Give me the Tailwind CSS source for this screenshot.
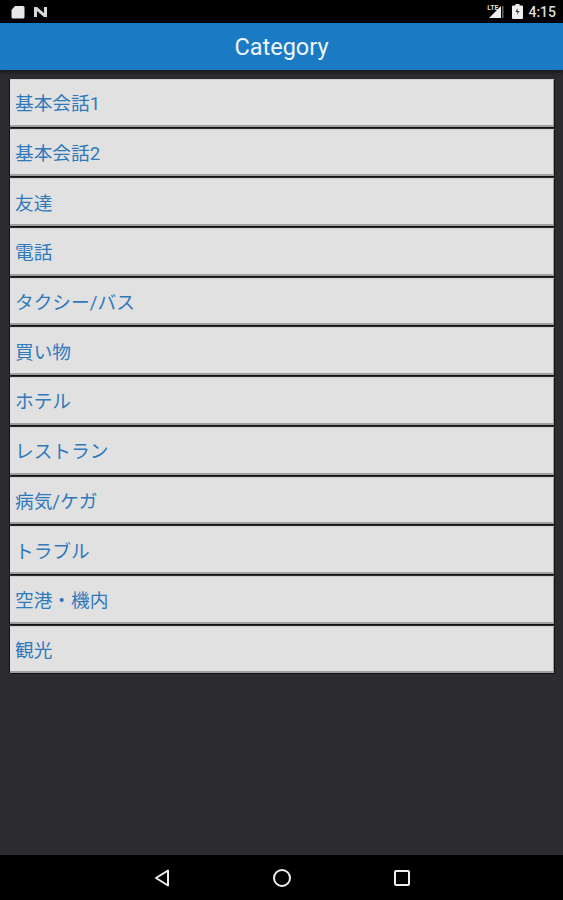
<!DOCTYPE html>
<html lang="ja">
<head>
  <meta charset="UTF-8">
  <title>Category</title>
  <script src="https://cdn.jsdelivr.net/npm/@tailwindcss/browser@4"></script>
</head>
<body class="bg-[#2b2b30] font-['Roboto','Noto_Sans_CJK_JP',sans-serif]">
  <div class="h-[900px] w-[563px] flex flex-col overflow-hidden">
    <!-- status bar -->
    <div class="h-[23px] bg-black flex items-center justify-between pl-[11px] pr-[7px] shrink-0">
      <div class="flex items-center gap-[8px]">
        <svg width="14" height="14" viewBox="0 0 14 14"><path d="M4 1h8a1.500 1.500 0 0 1 1.500 1.500V12a1.500 1.500 0 0 1-1.500 1.500H2A1.500 1.500 0 0 1 .5 12V5z" fill="#e8e8e8"/></svg>
        <svg width="15" height="12" viewBox="0 0 15 12"><path d="M1 1h3l7 6V1h3v10h-3L4 5v6H1z" fill="#d8d8d8"/></svg>
      </div>
      <div class="flex items-center">
        <span class="text-[7px] leading-none text-[#ddd] font-bold -mr-[10px] -mt-[7px] z-10">LTE</span>
        <svg width="16" height="14" viewBox="0 0 16 14"><path d="M13 1v12H1z" fill="#eee"/><rect x="14" y="1" width="1.500" height="12" fill="#666"/></svg>
        <svg class="ml-[8px]" width="11" height="15" viewBox="0 0 11 15"><path d="M3.500 0h4v1.500H10a1 1 0 0 1 1 1V14a1 1 0 0 1-1 1H1a1 1 0 0 1-1-1V2.500a1 1 0 0 1 1-1h2.500z" fill="#eee"/><path d="M5.500 4l-2 4h2l-.5 3 2.500-4h-2z" fill="#333"/></svg>
        <span class="ml-[5px] text-[14px] leading-none font-medium text-[#ddd]">4:15</span>
      </div>
    </div>
    <!-- header -->
    <div class="h-[47px] bg-[#1a7ac4] flex items-center justify-center pt-[2px] shrink-0 shadow-[0_2px_4px_rgba(0,0,0,0.5)]">
      <h1 class="text-[23.500px] text-[#f0f5fa]">Category</h1>
    </div>
    <!-- list -->
    <div class="flex-1 pl-[10px] pr-[9px] pt-[9px] flex flex-col gap-[2px]">
      <div class="h-[47.700px] bg-[#e1e1e1] border-t border-t-[#cfcfcf] border-r border-b-2 border-[#a0a0a0] shadow-[-1px_0_0_#111,1px_1px_0_#111] flex items-center pl-[5px] pt-[4px] text-[18.700px] text-[#3079bb]">基本会話1</div>
      <div class="h-[47.700px] bg-[#e1e1e1] border-t border-t-[#cfcfcf] border-r border-b-2 border-[#a0a0a0] shadow-[-1px_0_0_#111,1px_1px_0_#111] flex items-center pl-[5px] pt-[4px] text-[18.700px] text-[#3079bb]">基本会話2</div>
      <div class="h-[47.700px] bg-[#e1e1e1] border-t border-t-[#cfcfcf] border-r border-b-2 border-[#a0a0a0] shadow-[-1px_0_0_#111,1px_1px_0_#111] flex items-center pl-[5px] pt-[4px] text-[18.700px] text-[#3079bb]">友達</div>
      <div class="h-[47.700px] bg-[#e1e1e1] border-t border-t-[#cfcfcf] border-r border-b-2 border-[#a0a0a0] shadow-[-1px_0_0_#111,1px_1px_0_#111] flex items-center pl-[5px] pt-[4px] text-[18.700px] text-[#3079bb]">電話</div>
      <div class="h-[47.700px] bg-[#e1e1e1] border-t border-t-[#cfcfcf] border-r border-b-2 border-[#a0a0a0] shadow-[-1px_0_0_#111,1px_1px_0_#111] flex items-center pl-[5px] pt-[4px] text-[18.700px] text-[#3079bb]">タクシー/バス</div>
      <div class="h-[47.700px] bg-[#e1e1e1] border-t border-t-[#cfcfcf] border-r border-b-2 border-[#a0a0a0] shadow-[-1px_0_0_#111,1px_1px_0_#111] flex items-center pl-[5px] pt-[4px] text-[18.700px] text-[#3079bb]">買い物</div>
      <div class="h-[47.700px] bg-[#e1e1e1] border-t border-t-[#cfcfcf] border-r border-b-2 border-[#a0a0a0] shadow-[-1px_0_0_#111,1px_1px_0_#111] flex items-center pl-[5px] pt-[4px] text-[18.700px] text-[#3079bb]">ホテル</div>
      <div class="h-[47.700px] bg-[#e1e1e1] border-t border-t-[#cfcfcf] border-r border-b-2 border-[#a0a0a0] shadow-[-1px_0_0_#111,1px_1px_0_#111] flex items-center pl-[5px] pt-[4px] text-[18.700px] text-[#3079bb]">レストラン</div>
      <div class="h-[47.700px] bg-[#e1e1e1] border-t border-t-[#cfcfcf] border-r border-b-2 border-[#a0a0a0] shadow-[-1px_0_0_#111,1px_1px_0_#111] flex items-center pl-[5px] pt-[4px] text-[18.700px] text-[#3079bb]">病気/ケガ</div>
      <div class="h-[47.700px] bg-[#e1e1e1] border-t border-t-[#cfcfcf] border-r border-b-2 border-[#a0a0a0] shadow-[-1px_0_0_#111,1px_1px_0_#111] flex items-center pl-[5px] pt-[4px] text-[18.700px] text-[#3079bb]">トラブル</div>
      <div class="h-[47.700px] bg-[#e1e1e1] border-t border-t-[#cfcfcf] border-r border-b-2 border-[#a0a0a0] shadow-[-1px_0_0_#111,1px_1px_0_#111] flex items-center pl-[5px] pt-[4px] text-[18.700px] text-[#3079bb]">空港・機内</div>
      <div class="h-[47.700px] bg-[#e1e1e1] border-t border-t-[#cfcfcf] border-r border-b-2 border-[#a0a0a0] shadow-[-1px_0_0_#111,1px_1px_0_#111] flex items-center pl-[5px] pt-[4px] text-[18.700px] text-[#3079bb]">観光</div>
    </div>
    <!-- nav bar -->
    <div class="h-[45px] bg-black flex items-center justify-center gap-[96px] shrink-0">
      <svg width="24" height="24" viewBox="0 0 24 24"><path d="M18 4.500v15L6 12z" fill="none" stroke="#eee" stroke-width="2" stroke-linejoin="round"/></svg>
      <svg width="24" height="24" viewBox="0 0 24 24"><circle cx="12" cy="12" r="8" fill="none" stroke="#eee" stroke-width="2"/></svg>
      <svg width="24" height="24" viewBox="0 0 24 24"><rect x="5" y="5" width="14" height="14" rx="1" fill="none" stroke="#eee" stroke-width="2"/></svg>
    </div>
  </div>
</body>
</html>
